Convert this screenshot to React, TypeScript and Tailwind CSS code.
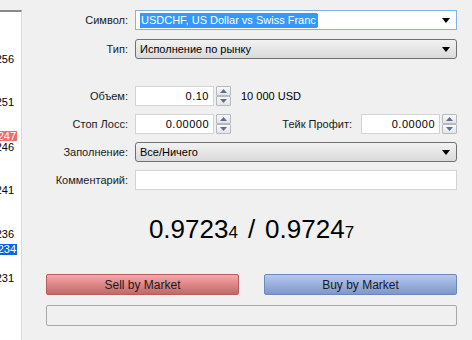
import React from "react";

const Arrow = () => (
  <svg width="8" height="5" viewBox="0 0 8 5" className="shrink-0">
    <path d="M0 0 H8 L4 5 Z" fill="#000" />
  </svg>
);

const Spinner = () => (
  <div className="w-[15px] h-[20px] flex flex-col ml-[2px] shrink-0">
    <div className="h-[10px] border border-[#b5b9c2] rounded-[1px] bg-gradient-to-b from-[#fafafa] to-[#e4e4e4] flex items-center justify-center">
      <svg width="7" height="4" viewBox="0 0 7 4">
        <path d="M0 4 L3.5 0 L7 4 Z" fill="#5b6f95" />
      </svg>
    </div>
    <div className="h-[10px] border border-[#b5b9c2] rounded-[1px] bg-gradient-to-b from-[#fafafa] to-[#e4e4e4] flex items-center justify-center">
      <svg width="7" height="4" viewBox="0 0 7 4">
        <path d="M0 0 L7 0 L3.5 4 Z" fill="#5b6f95" />
      </svg>
    </div>
  </div>
);

const Label = ({ children }: { children: React.ReactNode }) => (
  <div className="w-[113px] pr-[7px] text-right text-[#1a1a1a] shrink-0">{children}</div>
);

const NumInput = ({ value }: { value: string }) => (
  <div className="w-[79px] h-[20px] bg-white border border-[#d3d3d3] flex items-center justify-end pr-[4px] text-[#000] tracking-[0.5px] shrink-0">
    {value}
  </div>
);

export default function App() {
  return (
    <div className="flex w-[472px] h-[340px] bg-[#f0f0f0] overflow-hidden font-['Liberation_Sans',Arial,sans-serif] text-[11px] leading-none">
      <div className="w-[22px] pt-[10px] flex flex-col shrink-0">
        <div className="flex-1 bg-white border-t-2 border-t-[#8a8a8a] border-r border-r-[#d9d9d9] relative text-[#000]">
          <div className="absolute top-[42px] right-[7px]">256</div>
          <div className="absolute top-[85px] right-[7px]">251</div>
          <div className="absolute top-[119px] left-0 w-[17px] h-[10px] bg-[#f06b6b] text-white flex items-center justify-end pr-[1px]">247</div>
          <div className="absolute top-[130px] right-[7px]">246</div>
          <div className="absolute top-[173px] right-[7px]">241</div>
          <div className="absolute top-[217px] right-[7px]">236</div>
          <div className="absolute top-[232px] left-0 w-[17px] h-[11px] bg-[#0a64e6] text-white flex items-center justify-end pr-[1px]">234</div>
          <div className="absolute top-[261px] right-[7px]">231</div>
        </div>
      </div>

      <div className="flex-1 flex flex-col pt-[10px]">
        <div className="flex items-center h-[20px]">
          <Label>Символ:</Label>
          <div className="w-[322px] h-[20px] bg-white border border-[#7eb4ea] flex items-center pl-[4px] pr-[6px]">
            <span className="bg-[#3399ff] text-white px-[1px] py-[2px]">USDCHF, US Dollar vs Swiss Franc</span>
            <span className="w-px h-[13px] bg-[#e07020]" />
            <div className="flex-1" />
            <Arrow />
          </div>
        </div>

        <div className="flex items-center h-[20px] mt-[9px]">
          <Label>Тип:</Label>
          <div className="w-[322px] h-[20px] rounded-[3px] border border-[#707070] bg-gradient-to-b from-[#f2f2f2] to-[#dadada] flex items-center pl-[4px] pr-[6px] text-[#000]">
            <span>Исполнение по рынку</span>
            <div className="flex-1" />
            <Arrow />
          </div>
        </div>

        <div className="flex items-center h-[20px] mt-[27px]">
          <Label>Объем:</Label>
          <NumInput value="0.10" />
          <Spinner />
          <span className="ml-[10px] text-[#000]">10 000 USD</span>
        </div>

        <div className="flex items-center h-[20px] mt-[8px] w-[435px]">
          <Label>Стоп Лосс:</Label>
          <NumInput value="0.00000" />
          <Spinner />
          <div className="flex-1" />
          <span className="mr-[9px] text-[#1a1a1a]">Тейк Профит:</span>
          <NumInput value="0.00000" />
          <Spinner />
        </div>

        <div className="flex items-center h-[20px] mt-[8px]">
          <Label>Заполнение:</Label>
          <div className="w-[322px] h-[20px] rounded-[3px] border border-[#707070] bg-gradient-to-b from-[#f2f2f2] to-[#dadada] flex items-center pl-[4px] pr-[6px] text-[#000]">
            <span>Все/Ничего</span>
            <div className="flex-1" />
            <Arrow />
          </div>
        </div>

        <div className="flex items-center h-[20px] mt-[8px]">
          <Label>Комментарий:</Label>
          <div className="w-[322px] h-[20px] bg-white border border-[#d3d3d3]" />
        </div>

        <div className="ml-[24px] w-[411px] flex flex-col">
          <div className="h-[40px] mt-[19px] flex items-center justify-center text-[#000]">
            <div className="flex items-baseline">
              <span className="text-[26px]">0.9723</span>
              <span className="text-[17px]">4</span>
              <span className="text-[26px] mx-[10px]">/</span>
              <span className="text-[26px]">0.9724</span>
              <span className="text-[17px]">7</span>
            </div>
          </div>

          <div className="flex justify-between mt-[25px]">
            <button className="w-[193px] h-[21px] border border-[#b85c5c] rounded-[2px] bg-gradient-to-b from-[#f6a8a8] to-[#c26868] text-[#1a1a1a] text-[12px] flex items-center justify-center">
              Sell by Market
            </button>
            <button className="w-[193px] h-[21px] border border-[#6d88bf] rounded-[2px] bg-gradient-to-b from-[#b5caf0] to-[#7e97ca] text-[#1a1a1a] text-[12px] flex items-center justify-center">
              Buy by Market
            </button>
          </div>

          <div className="mt-[10px] h-[21px] w-[411px] border border-[#a8a8a8] rounded-[2px] bg-[#f0f0f0]" />
        </div>
      </div>
    </div>
  );
}
